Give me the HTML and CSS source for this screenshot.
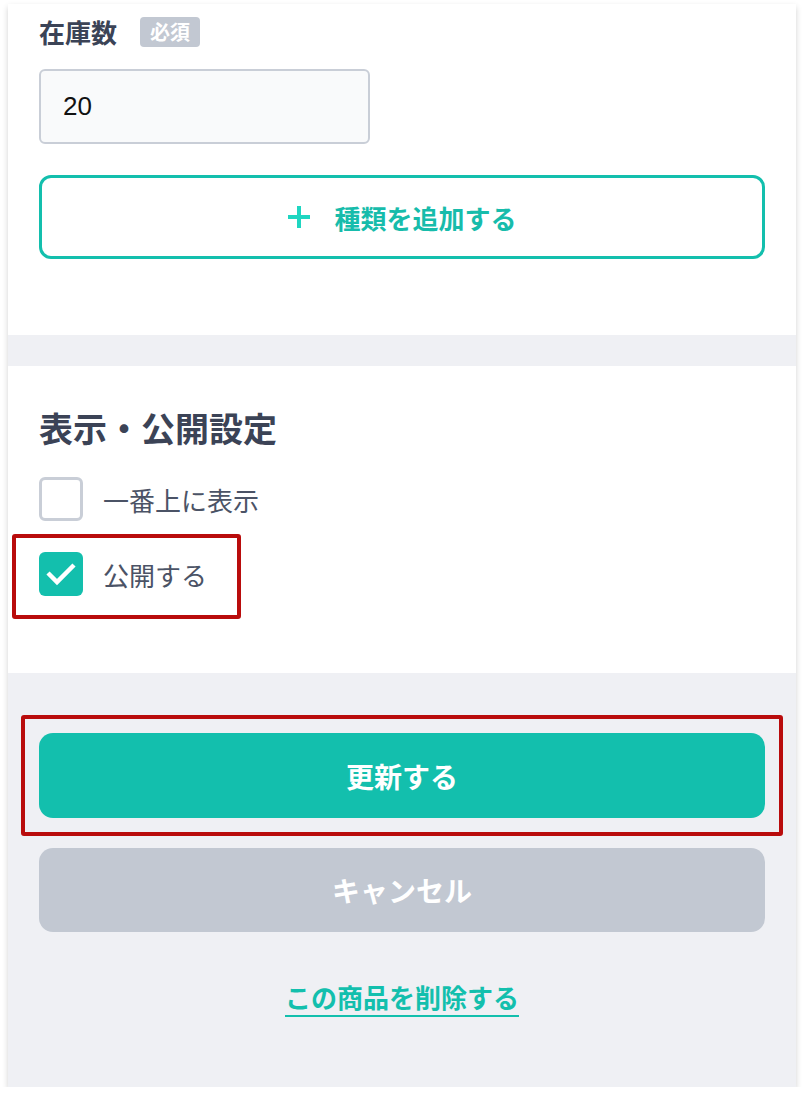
FILE: index.html
```html
<!DOCTYPE html>
<html lang="ja">
<head>
    <meta charset="UTF-8">
    <title>商品編集</title>
    <link rel="stylesheet" href="styles.css">
</head>
<body>
    <div class="screen">
        <section class="panel panel-stock">
            <div class="field-head">
                <span class="field-label">在庫数</span>
                <span class="badge">必須</span>
            </div>
            <input class="text-input" type="text" value="20">
            <button class="btn-outline" type="button">
                <svg class="plus" viewBox="0 0 24 24"><path d="M12 1V23M1 12H23" stroke="#1fd6c1" stroke-width="4" fill="none"/></svg>
                種類を追加する
            </button>
        </section>

        <section class="panel panel-visibility">
            <h2 class="section-title">表示・公開設定</h2>
            <div class="check-list">
                <label class="check">
                    <span class="box"></span>
                    <span>一番上に表示</span>
                </label>
                <label class="check">
                    <span class="box is-on">
                        <svg viewBox="0 0 44 44"><path d="M9 21L18 30L35 13" stroke="#fff" stroke-width="4.5" fill="none"/></svg>
                    </span>
                    <span>公開する</span>
                    <span class="mark"></span>
                </label>
            </div>
        </section>

        <div class="actions">
            <div class="marked">
                <button class="btn btn-primary" type="button">更新する</button>
                <span class="mark"></span>
            </div>
            <button class="btn btn-cancel" type="button">キャンセル</button>
            <a href="#" class="delete-link">この商品を削除する</a>
        </div>
    </div>
</body>
</html>
```

FILE: styles.css
```css
* {
    box-sizing: border-box;
}
body {
    margin: 0;
    background-color: #fff;
    font-family: "Noto Sans CJK JP", sans-serif;
    color: #3b4356;
}
.screen {
    width: 788px;
    margin: 4px 0 0 8px;
    background-color: #eff0f4;
    box-shadow: 0 3px 6px rgba(0,0,0,0.18);
}
.panel {
    background-color: #fff;
    padding: 0 31px;
}
.panel-stock {
    padding-top: 13px;
    padding-bottom: 76px;
    margin-bottom: 31px;
}
.field-head {
    display: flex;
    align-items: center;
    gap: 23px;
    height: 30px;
}
.field-label {
    font-size: 26px;
    font-weight: bold;
    line-height: 30px;
}
.badge {
    background-color: #c2c8d2;
    color: #fff;
    font-size: 20px;
    font-weight: bold;
    line-height: 30px;
    padding: 0 10px;
    border-radius: 4px;
}
.text-input {
    display: block;
    margin-top: 22px;
    width: 331px;
    height: 75px;
    border: 2px solid #c9ced7;
    border-radius: 6px;
    background-color: #f9fafb;
    padding: 0 22px;
    font: 26px "Liberation Sans", sans-serif;
    color: #111;
}
.btn-outline {
    display: flex;
    align-items: center;
    justify-content: center;
    gap: 23px;
    width: 100%;
    height: 84px;
    margin-top: 31px;
    border: 3px solid #13bfad;
    border-radius: 12px;
    background-color: #fff;
    color: #17bcab;
    font: bold 26px "Noto Sans CJK JP", sans-serif;
}
.plus {
    width: 24px;
    height: 24px;
}
.panel-visibility {
    padding-top: 38px;
    padding-bottom: 77px;
}
.section-title {
    margin: 0;
    font-size: 34px;
    font-weight: bold;
    line-height: 48px;
}
.check-list {
    margin-top: 25px;
    display: flex;
    flex-direction: column;
    align-items: flex-start;
    gap: 31px;
}
.check {
    position: relative;
    display: flex;
    align-items: center;
    gap: 20px;
    font-size: 26px;
    color: #4b5366;
}
.box {
    width: 44px;
    height: 44px;
    border: 3px solid #c9ced7;
    border-radius: 6px;
    background-color: #fff;
}
.box.is-on {
    border: none;
    background-color: #13bfad;
}
.box svg {
    display: block;
    width: 44px;
    height: 44px;
}
/* 赤枠の注釈 */
.mark {
    position: absolute;
    border: 4px solid #b90c0c;
    border-radius: 3px;
    pointer-events: none;
}
.check .mark {
    left: -27px;
    top: -18px;
    width: 229px;
    height: 85px;
}
.actions {
    padding: 60px 31px 70px;
    display: flex;
    flex-direction: column;
    align-items: center;
}
.marked {
    position: relative;
    width: 100%;
}
.marked .mark {
    inset: -18px;
}
.btn {
    display: block;
    width: 100%;
    height: 85px;
    border: none;
    border-radius: 14px;
    color: #fff;
    font: bold 28px "Noto Sans CJK JP", sans-serif;
}
.btn-primary {
    background-color: #13bfad;
}
.btn-cancel {
    height: 84px;
    margin-top: 30px;
    background-color: #c2c8d2;
}
.delete-link {
    margin-top: 47px;
    font-size: 26px;
    font-weight: bold;
    line-height: 36px;
    color: #13bfad;
    text-decoration: none;
    border-bottom: 2px solid #13bfad;
}
```
